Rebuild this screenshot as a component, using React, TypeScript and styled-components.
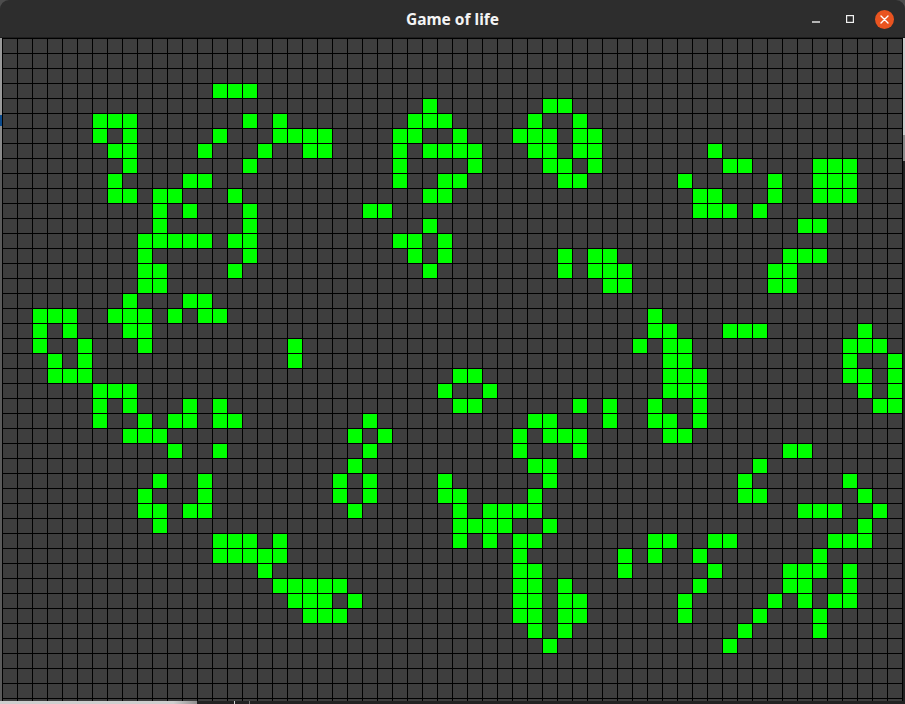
import React from "react";
import styled, { createGlobalStyle } from "styled-components";

const LIVE: Record<number, number[]> = {
  3: [14, 15, 16],
  4: [28, 36, 37],
  5: [6, 7, 8, 16, 18, 27, 28, 29, 35, 38],
  6: [6, 8, 14, 18, 19, 20, 21, 26, 27, 30, 34, 35, 36, 38, 39],
  7: [7, 8, 13, 17, 20, 21, 26, 28, 29, 30, 31, 35, 36, 38, 39, 47],
  8: [8, 16, 26, 31, 36, 37, 39, 48, 49, 54, 55, 56],
  9: [7, 12, 13, 26, 29, 30, 37, 38, 45, 51, 54, 55, 56],
  10: [7, 8, 10, 11, 15, 28, 29, 46, 47, 51, 54, 55, 56],
  11: [10, 12, 16, 24, 25, 46, 47, 48, 50],
  12: [10, 16, 28, 53, 54],
  13: [9, 10, 11, 12, 13, 15, 16, 26, 27, 29],
  14: [9, 16, 27, 29, 37, 39, 40, 52, 53, 54],
  15: [9, 10, 15, 28, 37, 39, 40, 41, 51, 52],
  16: [9, 10, 40, 41, 51, 52],
  17: [8, 12, 13],
  18: [2, 3, 4, 7, 8, 9, 11, 13, 14, 43],
  19: [2, 4, 8, 9, 43, 44, 48, 49, 50, 57],
  20: [2, 5, 9, 19, 42, 44, 45, 56, 57, 58],
  21: [3, 5, 19, 44, 45, 56, 59],
  22: [3, 4, 5, 30, 31, 44, 45, 46, 56, 57, 59],
  23: [6, 7, 8, 29, 32, 44, 45, 46, 57, 59],
  24: [6, 8, 12, 14, 30, 31, 38, 40, 43, 46, 58, 59],
  25: [6, 9, 11, 12, 14, 15, 24, 35, 36, 40, 43, 44, 46],
  26: [8, 9, 10, 23, 25, 34, 36, 37, 38, 44, 45],
  27: [11, 14, 24, 34, 38, 52, 53],
  28: [23, 35, 36, 50],
  29: [10, 13, 22, 24, 29, 36, 49, 56],
  30: [9, 13, 22, 24, 29, 30, 35, 49, 50, 57],
  31: [9, 10, 12, 13, 23, 30, 32, 33, 34, 35, 53, 54, 55, 58],
  32: [10, 30, 31, 32, 33, 36, 57],
  33: [14, 15, 16, 18, 30, 32, 34, 35, 43, 44, 47, 48, 55, 56, 57],
  34: [14, 15, 16, 17, 18, 34, 41, 43, 46, 54],
  35: [17, 34, 35, 41, 47, 52, 53, 54, 56],
  36: [18, 19, 20, 21, 22, 34, 35, 37, 46, 52, 53, 56],
  37: [19, 20, 21, 23, 34, 35, 37, 38, 45, 51, 53, 55, 56],
  38: [20, 21, 22, 34, 35, 37, 38, 45, 50, 54],
  39: [35, 37, 49, 54],
  40: [36, 48],
};

const COLUMNS = 60;
const ROWS = 45;

const GlobalStyle = createGlobalStyle`
  html, body {
    margin: 0;
    padding: 0;
    background: #4d4d4d;
  }
`;

const Desktop = styled.div`
  display: flex;
  flex-direction: column;
  width: 905px;
  height: 704px;
  overflow: hidden;
  background: #4d4d4d;
`;

const Window = styled.main`
  display: flex;
  flex-direction: column;
  height: 701px;
  flex: none;
`;

const TitleBar = styled.header`
  display: grid;
  grid-template-columns: 1fr auto 1fr;
  align-items: center;
  height: 37px;
  flex: none;
  padding: 0 11px;
  background: #2d2d2d;
  border-bottom: 1px solid #1e1e1e;
  border-radius: 9px 9px 0 0;
`;

const Title = styled.h1`
  grid-column: 2;
  margin: 0;
  font-family: "Noto Sans", "Open Sans", sans-serif;
  font-size: 15.5px;
  font-weight: 700;
  line-height: 38px;
  color: #f4f4f4;
`;

const Controls = styled.div`
  grid-column: 3;
  justify-self: end;
  display: flex;
  align-items: center;
  gap: 16px;
`;

const ControlIcon = styled.svg<{ $top?: number; $left?: number }>`
  display: block;
  flex: none;
  margin-top: ${(p) => p.$top ?? 0}px;
  margin-left: ${(p) => p.$left ?? 0}px;
`;

const CloseButton = styled.div`
  display: flex;
  align-items: center;
  justify-content: center;
  width: 19px;
  height: 19px;
  margin-left: 5px;
  border-radius: 50%;
  background: #e95420;
`;

const BoardRow = styled.div`
  display: flex;
  flex: 1;
  min-height: 0;
`;

const Edge = styled.div<{ $base: string }>`
  display: flex;
  flex-direction: column;
  flex: none;
  background: ${(p) => p.$base};
  width: 2px;
`;

const EdgeBand = styled.div<{ $h: number; $c: string }>`
  flex: none;
  height: ${(p) => p.$h}px;
  background: ${(p) => p.$c};
`;

const Board = styled.section`
  display: grid;
  grid-template-columns: repeat(${COLUMNS}, 14px);
  grid-auto-rows: 14px;
  gap: 1px;
  flex: none;
  width: 901px;
  padding: 1px 0 0 1px;
  box-sizing: border-box;
  overflow: hidden;
  background: #000000;
`;

const Cell = styled.div<{ $alive: boolean }>`
  background: ${(p) => (p.$alive ? "#00ff00" : "#3e3e3e")};
`;

const BottomStrip = styled.div`
  display: flex;
  flex: 1;
`;

const DesktopPatch = styled.div`
  flex: none;
  width: 197px;
  background: linear-gradient(90deg, #cfcfcf 0, #cfcfcf 88%, #8f8f8f 100%);
`;

const Taskbar = styled.div`
  display: flex;
  flex: 1;
  gap: 14px;
  padding-left: 37px;
  background: #222222;
`;

const Tick = styled.span<{ $c: string }>`
  display: block;
  width: 1px;
  height: 3px;
  background: ${(p) => p.$c};
`;

export default function App() {
  const cells = [];
  for (let r = 0; r < ROWS; r++) {
    const live = LIVE[r] ?? [];
    for (let c = 0; c < COLUMNS; c++) {
      cells.push(<Cell key={`${r}-${c}`} $alive={live.includes(c)} />);
    }
  }
  return (
    <Desktop>
      <GlobalStyle />
      <Window>
        <TitleBar>
          <Title>Game of life</Title>
          <Controls>
            <ControlIcon width="8" height="2" viewBox="0 0 8 2" $top={6}>
              <rect width="8" height="1.4" y="0.3" fill="#f0f0f0" />
            </ControlIcon>
            <ControlIcon width="8" height="8" viewBox="0 0 8 8" $left={10}>
              <rect x="0.6" y="0.6" width="6.8" height="6.8" fill="none" stroke="#f0f0f0" strokeWidth="1.2" />
            </ControlIcon>
            <CloseButton>
              <ControlIcon width="9" height="9" viewBox="0 0 9 9">
                <path d="M1 1 L8 8 M8 1 L1 8" stroke="#ffffff" strokeWidth="1.4" strokeLinecap="round" />
              </ControlIcon>
            </CloseButton>
          </Controls>
        </TitleBar>
        <BoardRow>
          <Edge $base="#5a5a5a">
            <EdgeBand $h={77} $c="#9a9a9a" />
            <EdgeBand $h={11} $c="#0b4a8c" />
            <EdgeBand $h={34} $c="#8a8a8a" />
          </Edge>
          <Board>{cells}</Board>
          <Edge $base="#232323">
            <EdgeBand $h={97} $c="#cdcdcd" />
            <EdgeBand $h={26} $c="#8c8c8c" />
          </Edge>
        </BoardRow>
      </Window>
      <BottomStrip>
        <DesktopPatch />
        <Taskbar>
          <Tick $c="#d0d0d0" />
          <Tick $c="#777777" />
        </Taskbar>
      </BottomStrip>
    </Desktop>
  );
}
